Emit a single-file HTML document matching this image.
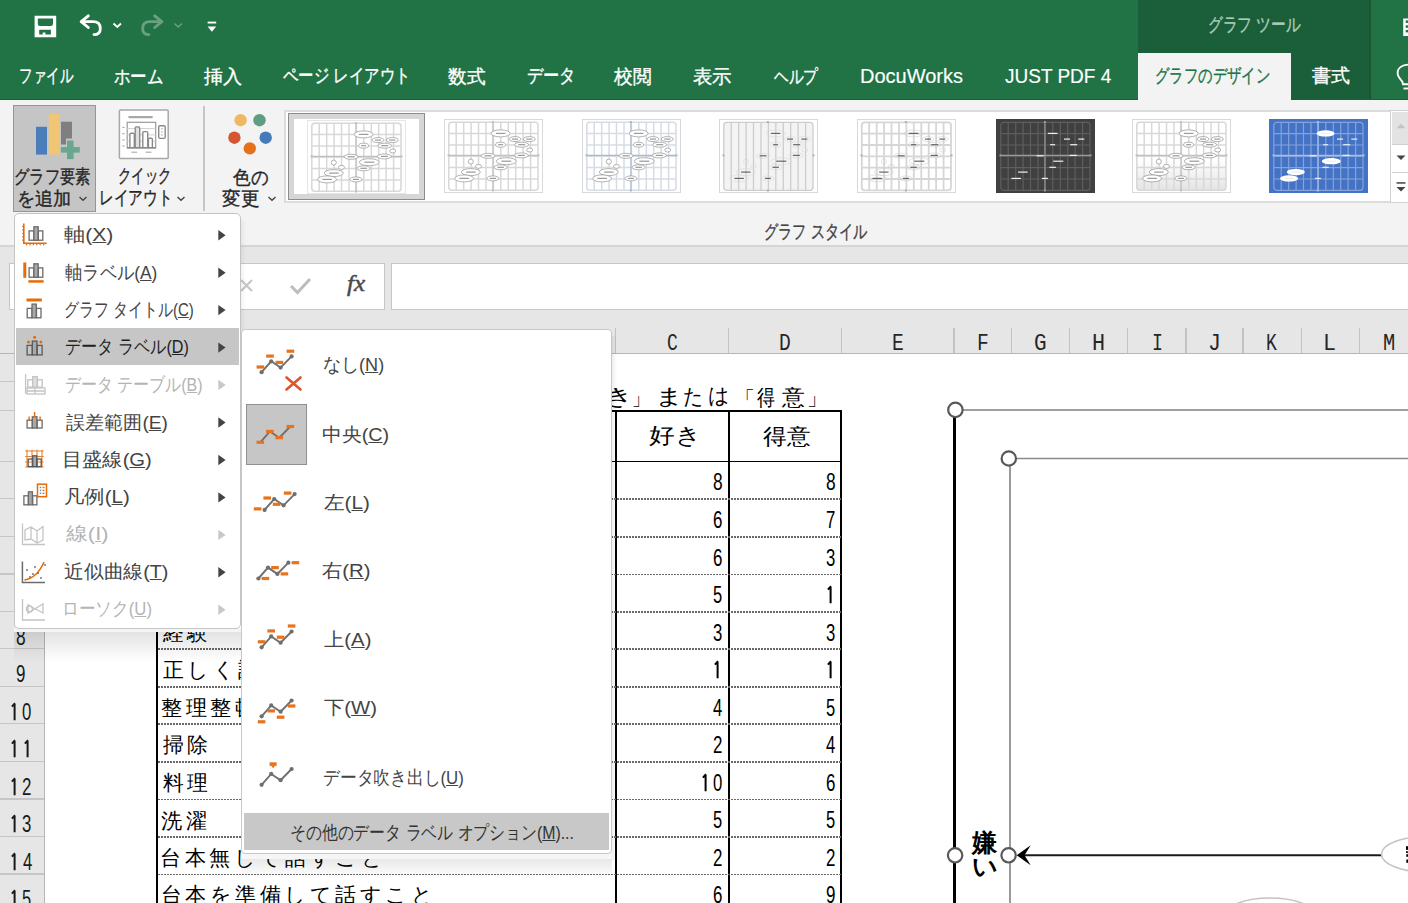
<!DOCTYPE html>
<html lang="ja"><head><meta charset="utf-8"><title>Excel</title>
<style>
html,body{margin:0;padding:0;width:1408px;height:903px;overflow:hidden;background:#fff;position:relative;font-family:'Liberation Sans',sans-serif}
body>div,body>svg{position:absolute}
.t{white-space:pre;transform-origin:0 0}
</style></head><body>
<div style="left:0px;top:0px;width:1408px;height:100px;background:#217346;"></div>
<div style="left:1137.5px;top:0px;width:233.0px;height:100px;background:#1b5e3a;"></div>
<div style="left:1137.5px;top:53px;width:153.0px;height:47px;background:#f3f3f3;"></div>
<div class="t" style="left:18.88px;top:57.10px;height:38px;line-height:38px;font-family:'Liberation Sans',sans-serif;font-size:19px;font-weight:400;color:#ffffff;transform:scaleX(0.7122);-webkit-text-stroke:0.35px currentColor">ファイル</div>
<div class="t" style="left:114.03px;top:57.60px;height:38px;line-height:38px;font-family:'Liberation Sans',sans-serif;font-size:19px;font-weight:400;color:#ffffff;transform:scaleX(0.8673);-webkit-text-stroke:0.35px currentColor">ホーム</div>
<div class="t" style="left:204.40px;top:57.75px;height:38px;line-height:38px;font-family:'Liberation Sans',sans-serif;font-size:19px;font-weight:400;color:#ffffff;transform:scaleX(1.0054);-webkit-text-stroke:0.35px currentColor">挿入</div>
<div class="t" style="left:283.40px;top:56.75px;height:38px;line-height:38px;font-family:'Liberation Sans',sans-serif;font-size:19px;font-weight:400;color:#ffffff;transform:scaleX(0.8092);-webkit-text-stroke:0.35px currentColor">ページ レイアウト</div>
<div class="t" style="left:448.30px;top:57.75px;height:38px;line-height:38px;font-family:'Liberation Sans',sans-serif;font-size:19px;font-weight:400;color:#ffffff;transform:scaleX(0.9816);-webkit-text-stroke:0.35px currentColor">数式</div>
<div class="t" style="left:526.55px;top:56.75px;height:38px;line-height:38px;font-family:'Liberation Sans',sans-serif;font-size:19px;font-weight:400;color:#ffffff;transform:scaleX(0.8547);-webkit-text-stroke:0.35px currentColor">データ</div>
<div class="t" style="left:613.90px;top:57.75px;height:38px;line-height:38px;font-family:'Liberation Sans',sans-serif;font-size:19px;font-weight:400;color:#ffffff;transform:scaleX(0.9838);-webkit-text-stroke:0.35px currentColor">校閲</div>
<div class="t" style="left:693.00px;top:57.75px;height:38px;line-height:38px;font-family:'Liberation Sans',sans-serif;font-size:19px;font-weight:400;color:#ffffff;transform:scaleX(1.0211);-webkit-text-stroke:0.35px currentColor">表示</div>
<div class="t" style="left:773.50px;top:58.25px;height:38px;line-height:38px;font-family:'Liberation Sans',sans-serif;font-size:19px;font-weight:400;color:#ffffff;transform:scaleX(0.7724);-webkit-text-stroke:0.35px currentColor">ヘルプ</div>
<div class="t" style="left:860.00px;top:56.30px;height:40px;line-height:40px;font-family:'Liberation Sans',sans-serif;font-size:20px;font-weight:400;color:#ffffff;transform:scaleX(1.0000);-webkit-text-stroke:0.15px currentColor">DocuWorks</div>
<div class="t" style="left:1004.60px;top:55.80px;height:40px;line-height:40px;font-family:'Liberation Sans',sans-serif;font-size:20px;font-weight:400;color:#ffffff;transform:scaleX(0.9500);-webkit-text-stroke:0.15px currentColor">JUST PDF 4</div>
<div class="t" style="left:1155.18px;top:56.85px;height:38px;line-height:38px;font-family:'Liberation Sans',sans-serif;font-size:19px;font-weight:400;color:#217346;transform:scaleX(0.7577);-webkit-text-stroke:0.35px currentColor">グラフのデザイン</div>
<div class="t" style="left:1312.30px;top:56.95px;height:38px;line-height:38px;font-family:'Liberation Sans',sans-serif;font-size:19px;font-weight:400;color:#ffffff;transform:scaleX(0.9974);-webkit-text-stroke:0.35px currentColor">書式</div>
<div class="t" style="left:1207.85px;top:6.10px;height:38px;line-height:38px;font-family:'Liberation Sans',sans-serif;font-size:19px;font-weight:400;color:#a9cdb8;transform:scaleX(0.7761);-webkit-text-stroke:0.35px currentColor">グラフ ツール</div>
<svg style="left:1400px;top:15px" width="8" height="25">
<rect x="3.2" y="3.5" width="4.8" height="17.5" fill="#fff"/>
<rect x="5.7" y="5.4" width="2.3" height="2.5" fill="#217346"/>
<rect x="5.7" y="10.3" width="2.3" height="2.5" fill="#217346"/>
<rect x="5.7" y="14.9" width="2.3" height="2.5" fill="#217346"/>
</svg>
<svg style="left:0;top:0" width="240" height="50">
<path fill="#fff" fill-rule="evenodd" d="M34.6 15.7 H56.2 V37.3 H34.6 Z M37.8 18.4 V23.8 Q37.8 26 40 26 H50.8 Q53 26 53 23.8 V18.4 Z M39.2 29.8 V34.6 H42.7 V32.6 H45.4 V34.6 H50.9 V29.8 Z"/>
<path d="M82 21.7 H93 Q100.3 21.7 100.3 28.4 Q100.3 34.6 94 34.6" fill="none" stroke="#fff" stroke-width="2.8" stroke-linecap="round"/>
<path d="M88.3 15.9 L81.2 21.7 L88.3 27.5" fill="none" stroke="#fff" stroke-width="2.9" stroke-linecap="round" stroke-linejoin="round"/>
<path d="M113.5 23.5 L117.3 27 L121 23.5" fill="none" stroke="#fff" stroke-width="1.9"/>
<g opacity="0.32">
<path d="M160.5 21.7 H150 Q142.7 21.7 142.7 28.4 Q142.7 34.6 149 34.6" fill="none" stroke="#fff" stroke-width="2.8" stroke-linecap="round"/>
<path d="M154.7 15.9 L161.8 21.7 L154.7 27.5" fill="none" stroke="#fff" stroke-width="2.9" stroke-linecap="round" stroke-linejoin="round"/>
<path d="M174.5 23.5 L178.2 27 L182 23.5" fill="none" stroke="#fff" stroke-width="1.6"/>
</g>
<rect x="207.6" y="21.6" width="8.6" height="1.9" fill="#fff"/>
<path d="M207.6 26.5 H216.2 L211.9 31.8 Z" fill="#fff"/>
</svg>
<svg style="left:1380px;top:55px" width="28" height="40">
<path d="M30 9.6 C22 9.6 17.6 13 17.6 18 C17.6 21.5 20 24 22.3 26.5 L23 29.2 H28" fill="none" stroke="#fff" stroke-width="1.9"/>
<path d="M23.5 33.5 H28" stroke="#fff" stroke-width="1.9"/>
</svg>
<div style="left:1368.5px;top:0px;width:2.0px;height:100px;background:#185634;"></div>
<div style="left:0px;top:100px;width:1408px;height:145px;background:#f3f3f3;"></div>
<div style="left:0px;top:99.2px;width:1137.5px;height:1.0px;background:#17613a;"></div>
<div style="left:1290.5px;top:99.2px;width:117.5px;height:1.0px;background:#17613a;"></div>
<div style="left:0px;top:245px;width:1408px;height:2px;background:#d5d5d5;"></div>
<div style="left:0px;top:247px;width:1408px;height:81px;background:#e6e6e6;"></div>
<div style="left:12.8px;top:104.5px;width:83.60000000000001px;height:107.1px;background:#c5c5c5;box-sizing:border-box;border:1.5px solid #959595"></div>
<svg style="left:0;top:100px" width="100" height="70">
<rect x="36" y="26.8" width="11" height="27.8" fill="#4a7ebb"/>
<rect x="48.8" y="14" width="10.9" height="40.6" fill="#f0c674"/>
<path d="M61 21.8 H72 V38.4 H66 V44.6 H61 Z" fill="#7f7f7f"/>
<rect x="60.9" y="47" width="18.9" height="5.6" fill="#68a890"/>
<rect x="67" y="40.5" width="6.6" height="18.6" fill="#68a890"/>
</svg>
<div class="t" style="left:13.78px;top:158.20px;height:38px;line-height:38px;font-family:'Liberation Sans',sans-serif;font-size:19px;font-weight:400;color:#262626;transform:scaleX(0.8086);-webkit-text-stroke:0.35px currentColor">グラフ要素</div>
<div class="t" style="left:16.59px;top:180.30px;height:38px;line-height:38px;font-family:'Liberation Sans',sans-serif;font-size:19px;font-weight:400;color:#262626;transform:scaleX(0.9528);-webkit-text-stroke:0.35px currentColor">を追加</div>
<div class="t" style="left:117.59px;top:157.20px;height:38px;line-height:38px;font-family:'Liberation Sans',sans-serif;font-size:19px;font-weight:400;color:#262626;transform:scaleX(0.7042);-webkit-text-stroke:0.35px currentColor">クイック</div>
<div class="t" style="left:98.68px;top:179.30px;height:38px;line-height:38px;font-family:'Liberation Sans',sans-serif;font-size:19px;font-weight:400;color:#262626;transform:scaleX(0.7727);-webkit-text-stroke:0.35px currentColor">レイアウト</div>
<div class="t" style="left:232.70px;top:158.70px;height:38px;line-height:38px;font-family:'Liberation Sans',sans-serif;font-size:19px;font-weight:400;color:#262626;transform:scaleX(0.9237);-webkit-text-stroke:0.35px currentColor">色の</div>
<div class="t" style="left:222.40px;top:180.30px;height:38px;line-height:38px;font-family:'Liberation Sans',sans-serif;font-size:19px;font-weight:400;color:#262626;transform:scaleX(0.9757);-webkit-text-stroke:0.35px currentColor">変更</div>
<svg style="left:0;top:190px" width="290" height="20">
<path d="M79.5 7 L83 10.3 L86.5 7" fill="none" stroke="#444" stroke-width="1.4"/>
<path d="M177.5 7 L181 10.3 L184.5 7" fill="none" stroke="#444" stroke-width="1.4"/>
<path d="M268.5 7 L272 10.3 L275.5 7" fill="none" stroke="#444" stroke-width="1.4"/>
</svg>
<svg style="left:112px;top:104px" width="64" height="60">
<rect x="7.4" y="6" width="48.8" height="48.5" rx="1" fill="#fff" stroke="#a8a8a8" stroke-width="1.5"/>
<rect x="16.3" y="12" width="24.6" height="2.3" rx="1" fill="#a8a8a8"/>
<rect x="15.2" y="18.3" width="28.5" height="25.4" fill="none" stroke="#9a9a9a" stroke-width="1.2"/>
<path d="M15.2 24.6 H43.7 M15.2 30.9 H43.7 M15.2 37.2 H43.7" stroke="#d0d0d0" stroke-width="1"/>
<g stroke="#8a8a8a" stroke-width="1.4" fill="#fff">
<path d="M17.9 43.5 V30.3 Q17.9 29.2 19 29.2 H21.2 Q22.3 29.2 22.3 30.3 V43.5"/>
<path d="M23.2 43.5 V24 Q23.2 22.9 24.3 22.9 H26.6 Q27.7 22.9 27.7 24 V43.5" fill="#e0e0e0"/>
<path d="M30.8 43.5 V28.7 Q30.8 27.6 31.9 27.6 H34.6 Q35.7 27.6 35.7 28.7 V43.5"/>
<path d="M36.4 43.5 V35.3 Q36.4 34.2 37.5 34.2 H39.3 Q40.4 34.2 40.4 35.3 V43.5"/>
</g>
<rect x="15" y="43" width="29" height="1.6" fill="#8a8a8a"/>
<g fill="#b0b0b0"><rect x="10.3" y="22.8" width="2.3" height="1.2"/><rect x="10.3" y="29.1" width="2.3" height="1.2"/><rect x="10.3" y="35.4" width="2.3" height="1.2"/><rect x="10.3" y="41.4" width="2.3" height="1.2"/>
<rect x="19.3" y="47.6" width="5.9" height="1.2"/><rect x="33.6" y="47.6" width="5.9" height="1.2"/></g>
<rect x="46.7" y="21.8" width="6.5" height="12.6" rx="1.3" fill="#fff" stroke="#8a8a8a" stroke-width="1.4"/>
<g fill="#b0b0b0"><rect x="49.2" y="24" width="1.4" height="1.3"/><rect x="49.2" y="27.3" width="1.4" height="1.3"/><rect x="49.2" y="30.3" width="1.4" height="1.3"/></g>
</svg>
<div style="left:203.3px;top:106px;width:1.5px;height:105px;background:#c6c6c6;"></div>
<svg style="left:225px;top:110px" width="50" height="50">
<circle cx="15.6" cy="10.2" r="6.2" fill="#efb864"/>
<circle cx="34.5" cy="10.2" r="6.2" fill="#5f9e84"/>
<circle cx="9.4" cy="27.7" r="6.2" fill="#d65532"/>
<circle cx="40.7" cy="27.7" r="6.2" fill="#447bb8"/>
<circle cx="24.8" cy="38.4" r="6.2" fill="#e6711d"/>
</svg>
<div style="left:284.2px;top:109.8px;width:1105.8px;height:93.00000000000001px;background:#ffffff;box-sizing:border-box;border-top:2px solid #dcdcdc;border-bottom:2px solid #dcdcdc;border-left:2px solid #dcdcdc"></div>
<div class="t" style="left:764.10px;top:212.80px;height:38px;line-height:38px;font-family:'Liberation Sans',sans-serif;font-size:19px;font-weight:400;color:#444;transform:scaleX(0.7478);-webkit-text-stroke:0.35px currentColor">グラフ スタイル</div>
<div style="left:287.7px;top:112.8px;width:136.90000000000003px;height:87.00000000000001px;background:#d6d6d6;box-sizing:border-box;border:1.8px solid #8c8c8c"></div>
<div style="left:293.6px;top:118.7px;width:125.39999999999998px;height:75.3px;background:#fff;"></div>
<svg style="left:306.5px;top:119.5px" width="99" height="74"><rect x="0.5" y="0.5" width="98" height="73" fill="#fff" stroke="#e6e6e6" stroke-width="1"/><g stroke="#d8d8d8" stroke-width="1.5" fill="none"><rect x="4.8" y="3.3" width="89.2" height="68" rx="3"/><path d="M12.2 3.3 V71.3"/><path d="M19.7 3.3 V71.3"/><path d="M27.1 3.3 V71.3"/><path d="M34.5 3.3 V71.3"/><path d="M42.0 3.3 V71.3"/><path d="M49.4 3.3 V71.3"/><path d="M56.8 3.3 V71.3"/><path d="M64.3 3.3 V71.3"/><path d="M71.7 3.3 V71.3"/><path d="M79.1 3.3 V71.3"/><path d="M86.6 3.3 V71.3"/><path d="M4.8 14.6 H94"/><path d="M4.8 26.0 H94"/><path d="M4.8 37.3 H94"/><path d="M4.8 48.6 H94"/><path d="M4.8 60.0 H94"/></g><path d="M48.9 3 V71.5 M4.5 36.4 H94.3" stroke="#c0c0c0" stroke-width="1.1"/><g fill="#c0c0c0"><rect x="47.9" y="2" width="2" height="2"/><rect x="47.9" y="70.5" width="2" height="2"/><rect x="3.5" y="35.4" width="2" height="2"/><rect x="93.5" y="35.4" width="2" height="2"/></g><ellipse cx="56.6" cy="14.4" rx="9.5" ry="3.5" fill="#fff" stroke="#a0a0a0" stroke-width="0.8"/><rect x="51.9" y="13.8" width="9.5" height="1.2" fill="#9a9a9a"/><ellipse cx="71" cy="20.1" rx="6" ry="2.5" fill="#fff" stroke="#a0a0a0" stroke-width="0.8"/><rect x="68.0" y="19.5" width="6.0" height="1.2" fill="#9a9a9a"/><ellipse cx="85.3" cy="20.1" rx="6" ry="2.5" fill="#fff" stroke="#a0a0a0" stroke-width="0.8"/><rect x="82.3" y="19.5" width="6.0" height="1.2" fill="#9a9a9a"/><ellipse cx="56.6" cy="25.7" rx="5" ry="2.5" fill="#fff" stroke="#a0a0a0" stroke-width="0.8"/><rect x="54.1" y="25.1" width="5.0" height="1.2" fill="#9a9a9a"/><ellipse cx="77.7" cy="25.7" rx="7" ry="2.5" fill="#fff" stroke="#a0a0a0" stroke-width="0.8"/><rect x="74.2" y="25.1" width="7.0" height="1.2" fill="#9a9a9a"/><ellipse cx="85.7" cy="31" rx="3" ry="2" fill="#fff" stroke="#a0a0a0" stroke-width="0.8"/><ellipse cx="44.1" cy="36.8" rx="7" ry="2.5" fill="#fff" stroke="#a0a0a0" stroke-width="0.8"/><rect x="40.6" y="36.2" width="7.0" height="1.2" fill="#9a9a9a"/><ellipse cx="77.3" cy="36.4" rx="7" ry="2.5" fill="#fff" stroke="#a0a0a0" stroke-width="0.8"/><rect x="73.8" y="35.8" width="7.0" height="1.2" fill="#9a9a9a"/><ellipse cx="62.3" cy="42.2" rx="10" ry="3.5" fill="#fff" stroke="#a0a0a0" stroke-width="0.8"/><rect x="57.3" y="41.6" width="10.0" height="1.2" fill="#9a9a9a"/><ellipse cx="26.8" cy="42.6" rx="2.5" ry="2.5" fill="#fff" stroke="#a0a0a0" stroke-width="0.8"/><ellipse cx="34.5" cy="47.4" rx="3" ry="2" fill="#fff" stroke="#a0a0a0" stroke-width="0.8"/><ellipse cx="56.6" cy="48.3" rx="6.5" ry="2.5" fill="#fff" stroke="#a0a0a0" stroke-width="0.8"/><rect x="53.4" y="47.7" width="6.5" height="1.2" fill="#9a9a9a"/><ellipse cx="26.8" cy="53.1" rx="9.5" ry="3.5" fill="#fff" stroke="#a0a0a0" stroke-width="0.8"/><rect x="22.1" y="52.5" width="9.5" height="1.2" fill="#9a9a9a"/><ellipse cx="20.1" cy="59.4" rx="9.5" ry="3.5" fill="#fff" stroke="#a0a0a0" stroke-width="0.8"/><rect x="15.4" y="58.8" width="9.5" height="1.2" fill="#9a9a9a"/><ellipse cx="48.9" cy="59.4" rx="6" ry="2.5" fill="#fff" stroke="#a0a0a0" stroke-width="0.8"/><rect x="45.9" y="58.8" width="6.0" height="1.2" fill="#9a9a9a"/></svg>
<svg style="left:444.4px;top:119.1px" width="99" height="74"><rect x="0.5" y="0.5" width="98" height="73" fill="#fff" stroke="#d9d9d9" stroke-width="1"/><g stroke="#d8d8d8" stroke-width="1.5" fill="none"><rect x="4.8" y="3.3" width="89.2" height="68" rx="3"/><path d="M12.2 3.3 V71.3"/><path d="M19.7 3.3 V71.3"/><path d="M27.1 3.3 V71.3"/><path d="M34.5 3.3 V71.3"/><path d="M42.0 3.3 V71.3"/><path d="M49.4 3.3 V71.3"/><path d="M56.8 3.3 V71.3"/><path d="M64.3 3.3 V71.3"/><path d="M71.7 3.3 V71.3"/><path d="M79.1 3.3 V71.3"/><path d="M86.6 3.3 V71.3"/><path d="M4.8 14.6 H94"/><path d="M4.8 26.0 H94"/><path d="M4.8 37.3 H94"/><path d="M4.8 48.6 H94"/><path d="M4.8 60.0 H94"/></g><path d="M48.9 3 V71.5 M4.5 36.4 H94.3" stroke="#c0c0c0" stroke-width="1.1"/><g fill="#c0c0c0"><rect x="47.9" y="2" width="2" height="2"/><rect x="47.9" y="70.5" width="2" height="2"/><rect x="3.5" y="35.4" width="2" height="2"/><rect x="93.5" y="35.4" width="2" height="2"/></g><ellipse cx="56.6" cy="14.4" rx="9.5" ry="3.5" fill="#fff" stroke="#a0a0a0" stroke-width="0.8"/><rect x="51.9" y="13.8" width="9.5" height="1.2" fill="#9a9a9a"/><ellipse cx="71" cy="20.1" rx="6" ry="2.5" fill="#fff" stroke="#a0a0a0" stroke-width="0.8"/><rect x="68.0" y="19.5" width="6.0" height="1.2" fill="#9a9a9a"/><ellipse cx="85.3" cy="20.1" rx="6" ry="2.5" fill="#fff" stroke="#a0a0a0" stroke-width="0.8"/><rect x="82.3" y="19.5" width="6.0" height="1.2" fill="#9a9a9a"/><ellipse cx="56.6" cy="25.7" rx="5" ry="2.5" fill="#fff" stroke="#a0a0a0" stroke-width="0.8"/><rect x="54.1" y="25.1" width="5.0" height="1.2" fill="#9a9a9a"/><ellipse cx="77.7" cy="25.7" rx="7" ry="2.5" fill="#fff" stroke="#a0a0a0" stroke-width="0.8"/><rect x="74.2" y="25.1" width="7.0" height="1.2" fill="#9a9a9a"/><ellipse cx="85.7" cy="31" rx="3" ry="2" fill="#fff" stroke="#a0a0a0" stroke-width="0.8"/><ellipse cx="44.1" cy="36.8" rx="7" ry="2.5" fill="#fff" stroke="#a0a0a0" stroke-width="0.8"/><rect x="40.6" y="36.2" width="7.0" height="1.2" fill="#9a9a9a"/><ellipse cx="77.3" cy="36.4" rx="7" ry="2.5" fill="#fff" stroke="#a0a0a0" stroke-width="0.8"/><rect x="73.8" y="35.8" width="7.0" height="1.2" fill="#9a9a9a"/><ellipse cx="62.3" cy="42.2" rx="10" ry="3.5" fill="#fff" stroke="#a0a0a0" stroke-width="0.8"/><rect x="57.3" y="41.6" width="10.0" height="1.2" fill="#9a9a9a"/><ellipse cx="26.8" cy="42.6" rx="2.5" ry="2.5" fill="#fff" stroke="#a0a0a0" stroke-width="0.8"/><ellipse cx="34.5" cy="47.4" rx="3" ry="2" fill="#fff" stroke="#a0a0a0" stroke-width="0.8"/><ellipse cx="56.6" cy="48.3" rx="6.5" ry="2.5" fill="#fff" stroke="#a0a0a0" stroke-width="0.8"/><rect x="53.4" y="47.7" width="6.5" height="1.2" fill="#9a9a9a"/><ellipse cx="26.8" cy="53.1" rx="9.5" ry="3.5" fill="#fff" stroke="#a0a0a0" stroke-width="0.8"/><rect x="22.1" y="52.5" width="9.5" height="1.2" fill="#9a9a9a"/><ellipse cx="20.1" cy="59.4" rx="9.5" ry="3.5" fill="#fff" stroke="#a0a0a0" stroke-width="0.8"/><rect x="15.4" y="58.8" width="9.5" height="1.2" fill="#9a9a9a"/><ellipse cx="48.9" cy="59.4" rx="6" ry="2.5" fill="#fff" stroke="#a0a0a0" stroke-width="0.8"/><rect x="45.9" y="58.8" width="6.0" height="1.2" fill="#9a9a9a"/></svg>
<svg style="left:581.9px;top:119.1px" width="99" height="74"><rect x="0.5" y="0.5" width="98" height="73" fill="#fff" stroke="#d9d9d9" stroke-width="1"/><g stroke="#d6dbe4" stroke-width="1.5" fill="none"><rect x="4.8" y="3.3" width="89.2" height="68" rx="3"/><path d="M12.2 3.3 V71.3"/><path d="M19.7 3.3 V71.3"/><path d="M27.1 3.3 V71.3"/><path d="M34.5 3.3 V71.3"/><path d="M42.0 3.3 V71.3"/><path d="M49.4 3.3 V71.3"/><path d="M56.8 3.3 V71.3"/><path d="M64.3 3.3 V71.3"/><path d="M71.7 3.3 V71.3"/><path d="M79.1 3.3 V71.3"/><path d="M86.6 3.3 V71.3"/><path d="M4.8 14.6 H94"/><path d="M4.8 26.0 H94"/><path d="M4.8 37.3 H94"/><path d="M4.8 48.6 H94"/><path d="M4.8 60.0 H94"/></g><path d="M48.9 3 V71.5 M4.5 36.4 H94.3" stroke="#a9b9d3" stroke-width="1.1"/><g fill="#a9b9d3"><rect x="47.9" y="2" width="2" height="2"/><rect x="47.9" y="70.5" width="2" height="2"/><rect x="3.5" y="35.4" width="2" height="2"/><rect x="93.5" y="35.4" width="2" height="2"/></g><ellipse cx="56.6" cy="14.4" rx="9.5" ry="3.5" fill="#fff" stroke="#a0a0a0" stroke-width="0.8"/><rect x="51.9" y="13.8" width="9.5" height="1.2" fill="#9a9a9a"/><ellipse cx="71" cy="20.1" rx="6" ry="2.5" fill="#fff" stroke="#a0a0a0" stroke-width="0.8"/><rect x="68.0" y="19.5" width="6.0" height="1.2" fill="#9a9a9a"/><ellipse cx="85.3" cy="20.1" rx="6" ry="2.5" fill="#fff" stroke="#a0a0a0" stroke-width="0.8"/><rect x="82.3" y="19.5" width="6.0" height="1.2" fill="#9a9a9a"/><ellipse cx="56.6" cy="25.7" rx="5" ry="2.5" fill="#fff" stroke="#a0a0a0" stroke-width="0.8"/><rect x="54.1" y="25.1" width="5.0" height="1.2" fill="#9a9a9a"/><ellipse cx="77.7" cy="25.7" rx="7" ry="2.5" fill="#fff" stroke="#a0a0a0" stroke-width="0.8"/><rect x="74.2" y="25.1" width="7.0" height="1.2" fill="#9a9a9a"/><ellipse cx="85.7" cy="31" rx="3" ry="2" fill="#fff" stroke="#a0a0a0" stroke-width="0.8"/><ellipse cx="44.1" cy="36.8" rx="7" ry="2.5" fill="#fff" stroke="#a0a0a0" stroke-width="0.8"/><rect x="40.6" y="36.2" width="7.0" height="1.2" fill="#9a9a9a"/><ellipse cx="77.3" cy="36.4" rx="7" ry="2.5" fill="#fff" stroke="#a0a0a0" stroke-width="0.8"/><rect x="73.8" y="35.8" width="7.0" height="1.2" fill="#9a9a9a"/><ellipse cx="62.3" cy="42.2" rx="10" ry="3.5" fill="#fff" stroke="#a0a0a0" stroke-width="0.8"/><rect x="57.3" y="41.6" width="10.0" height="1.2" fill="#9a9a9a"/><ellipse cx="26.8" cy="42.6" rx="2.5" ry="2.5" fill="#fff" stroke="#a0a0a0" stroke-width="0.8"/><ellipse cx="34.5" cy="47.4" rx="3" ry="2" fill="#fff" stroke="#a0a0a0" stroke-width="0.8"/><ellipse cx="56.6" cy="48.3" rx="6.5" ry="2.5" fill="#fff" stroke="#a0a0a0" stroke-width="0.8"/><rect x="53.4" y="47.7" width="6.5" height="1.2" fill="#9a9a9a"/><ellipse cx="26.8" cy="53.1" rx="9.5" ry="3.5" fill="#fff" stroke="#a0a0a0" stroke-width="0.8"/><rect x="22.1" y="52.5" width="9.5" height="1.2" fill="#9a9a9a"/><ellipse cx="20.1" cy="59.4" rx="9.5" ry="3.5" fill="#fff" stroke="#a0a0a0" stroke-width="0.8"/><rect x="15.4" y="58.8" width="9.5" height="1.2" fill="#9a9a9a"/><ellipse cx="48.9" cy="59.4" rx="6" ry="2.5" fill="#fff" stroke="#a0a0a0" stroke-width="0.8"/><rect x="45.9" y="58.8" width="6.0" height="1.2" fill="#9a9a9a"/></svg>
<svg style="left:719.2px;top:119.1px" width="99" height="74"><rect x="0.5" y="0.5" width="98" height="73" fill="#fff" stroke="#d9d9d9" stroke-width="1"/><rect x="4.8" y="3.3" width="89.2" height="68" rx="3" fill="#f3f3f3"/><g stroke="#cdcdcd" stroke-width="1.3" fill="none"><rect x="4.8" y="3.3" width="89.2" height="68" rx="3"/><path d="M12.2 3.3 V71.3"/><path d="M19.7 3.3 V71.3"/><path d="M27.1 3.3 V71.3"/><path d="M34.5 3.3 V71.3"/><path d="M42.0 3.3 V71.3"/><path d="M49.4 3.3 V71.3"/><path d="M56.8 3.3 V71.3"/><path d="M64.3 3.3 V71.3"/><path d="M71.7 3.3 V71.3"/><path d="M79.1 3.3 V71.3"/><path d="M86.6 3.3 V71.3"/></g><g fill="#b0b0b0"><rect x="47.9" y="2" width="2" height="2"/><rect x="47.9" y="70.5" width="2" height="2"/><rect x="3.5" y="35.4" width="2" height="2"/><rect x="93.5" y="35.4" width="2" height="2"/></g><ellipse cx="56.6" cy="14.4" rx="9.5" ry="3.5" fill="none" stroke="#d8d8d8" stroke-width="0.6"/><rect x="51.9" y="13.8" width="9.5" height="1.2" fill="#666"/><ellipse cx="71" cy="20.1" rx="6" ry="2.5" fill="none" stroke="#d8d8d8" stroke-width="0.6"/><rect x="68.0" y="19.5" width="6.0" height="1.2" fill="#666"/><ellipse cx="85.3" cy="20.1" rx="6" ry="2.5" fill="none" stroke="#d8d8d8" stroke-width="0.6"/><rect x="82.3" y="19.5" width="6.0" height="1.2" fill="#666"/><ellipse cx="56.6" cy="25.7" rx="5" ry="2.5" fill="none" stroke="#d8d8d8" stroke-width="0.6"/><rect x="54.1" y="25.1" width="5.0" height="1.2" fill="#666"/><ellipse cx="77.7" cy="25.7" rx="7" ry="2.5" fill="none" stroke="#d8d8d8" stroke-width="0.6"/><rect x="74.2" y="25.1" width="7.0" height="1.2" fill="#666"/><ellipse cx="85.7" cy="31" rx="3" ry="2" fill="none" stroke="#d8d8d8" stroke-width="0.6"/><ellipse cx="44.1" cy="36.8" rx="7" ry="2.5" fill="none" stroke="#d8d8d8" stroke-width="0.6"/><rect x="40.6" y="36.2" width="7.0" height="1.2" fill="#666"/><ellipse cx="77.3" cy="36.4" rx="7" ry="2.5" fill="none" stroke="#d8d8d8" stroke-width="0.6"/><rect x="73.8" y="35.8" width="7.0" height="1.2" fill="#666"/><ellipse cx="62.3" cy="42.2" rx="10" ry="3.5" fill="none" stroke="#d8d8d8" stroke-width="0.6"/><rect x="57.3" y="41.6" width="10.0" height="1.2" fill="#666"/><ellipse cx="26.8" cy="42.6" rx="2.5" ry="2.5" fill="none" stroke="#d8d8d8" stroke-width="0.6"/><ellipse cx="34.5" cy="47.4" rx="3" ry="2" fill="none" stroke="#d8d8d8" stroke-width="0.6"/><ellipse cx="56.6" cy="48.3" rx="6.5" ry="2.5" fill="none" stroke="#d8d8d8" stroke-width="0.6"/><rect x="53.4" y="47.7" width="6.5" height="1.2" fill="#666"/><ellipse cx="26.8" cy="53.1" rx="9.5" ry="3.5" fill="none" stroke="#d8d8d8" stroke-width="0.6"/><rect x="22.1" y="52.5" width="9.5" height="1.2" fill="#666"/><ellipse cx="20.1" cy="59.4" rx="9.5" ry="3.5" fill="none" stroke="#d8d8d8" stroke-width="0.6"/><rect x="15.4" y="58.8" width="9.5" height="1.2" fill="#666"/><ellipse cx="48.9" cy="59.4" rx="6" ry="2.5" fill="none" stroke="#d8d8d8" stroke-width="0.6"/><rect x="45.9" y="58.8" width="6.0" height="1.2" fill="#666"/></svg>
<svg style="left:856.9px;top:119.1px" width="99" height="74"><rect x="0.5" y="0.5" width="98" height="73" fill="#fff" stroke="#d9d9d9" stroke-width="1"/><g stroke="#d6d6d6" stroke-width="1.8" fill="none"><rect x="4.8" y="3.3" width="89.2" height="68" rx="3"/><path d="M12.2 3.3 V71.3"/><path d="M19.7 3.3 V71.3"/><path d="M27.1 3.3 V71.3"/><path d="M34.5 3.3 V71.3"/><path d="M42.0 3.3 V71.3"/><path d="M49.4 3.3 V71.3"/><path d="M56.8 3.3 V71.3"/><path d="M64.3 3.3 V71.3"/><path d="M71.7 3.3 V71.3"/><path d="M79.1 3.3 V71.3"/><path d="M86.6 3.3 V71.3"/><path d="M4.8 14.6 H94"/><path d="M4.8 26.0 H94"/><path d="M4.8 37.3 H94"/><path d="M4.8 48.6 H94"/><path d="M4.8 60.0 H94"/></g><g fill="#b0b0b0"><rect x="47.9" y="2" width="2" height="2"/><rect x="47.9" y="70.5" width="2" height="2"/><rect x="3.5" y="35.4" width="2" height="2"/><rect x="93.5" y="35.4" width="2" height="2"/></g><ellipse cx="56.6" cy="14.4" rx="9.5" ry="3.5" fill="none" stroke="#d0d0d0" stroke-width="0.6"/><rect x="51.9" y="13.8" width="9.5" height="1.2" fill="#666"/><ellipse cx="71" cy="20.1" rx="6" ry="2.5" fill="none" stroke="#d0d0d0" stroke-width="0.6"/><rect x="68.0" y="19.5" width="6.0" height="1.2" fill="#666"/><ellipse cx="85.3" cy="20.1" rx="6" ry="2.5" fill="none" stroke="#d0d0d0" stroke-width="0.6"/><rect x="82.3" y="19.5" width="6.0" height="1.2" fill="#666"/><ellipse cx="56.6" cy="25.7" rx="5" ry="2.5" fill="none" stroke="#d0d0d0" stroke-width="0.6"/><rect x="54.1" y="25.1" width="5.0" height="1.2" fill="#666"/><ellipse cx="77.7" cy="25.7" rx="7" ry="2.5" fill="none" stroke="#d0d0d0" stroke-width="0.6"/><rect x="74.2" y="25.1" width="7.0" height="1.2" fill="#666"/><ellipse cx="85.7" cy="31" rx="3" ry="2" fill="none" stroke="#d0d0d0" stroke-width="0.6"/><ellipse cx="44.1" cy="36.8" rx="7" ry="2.5" fill="none" stroke="#d0d0d0" stroke-width="0.6"/><rect x="40.6" y="36.2" width="7.0" height="1.2" fill="#666"/><ellipse cx="77.3" cy="36.4" rx="7" ry="2.5" fill="none" stroke="#d0d0d0" stroke-width="0.6"/><rect x="73.8" y="35.8" width="7.0" height="1.2" fill="#666"/><ellipse cx="62.3" cy="42.2" rx="10" ry="3.5" fill="none" stroke="#d0d0d0" stroke-width="0.6"/><rect x="57.3" y="41.6" width="10.0" height="1.2" fill="#666"/><ellipse cx="26.8" cy="42.6" rx="2.5" ry="2.5" fill="none" stroke="#d0d0d0" stroke-width="0.6"/><ellipse cx="34.5" cy="47.4" rx="3" ry="2" fill="none" stroke="#d0d0d0" stroke-width="0.6"/><ellipse cx="56.6" cy="48.3" rx="6.5" ry="2.5" fill="none" stroke="#d0d0d0" stroke-width="0.6"/><rect x="53.4" y="47.7" width="6.5" height="1.2" fill="#666"/><ellipse cx="26.8" cy="53.1" rx="9.5" ry="3.5" fill="none" stroke="#d0d0d0" stroke-width="0.6"/><rect x="22.1" y="52.5" width="9.5" height="1.2" fill="#666"/><ellipse cx="20.1" cy="59.4" rx="9.5" ry="3.5" fill="none" stroke="#d0d0d0" stroke-width="0.6"/><rect x="15.4" y="58.8" width="9.5" height="1.2" fill="#666"/><ellipse cx="48.9" cy="59.4" rx="6" ry="2.5" fill="none" stroke="#d0d0d0" stroke-width="0.6"/><rect x="45.9" y="58.8" width="6.0" height="1.2" fill="#666"/></svg>
<svg style="left:995.9px;top:119.1px" width="99" height="74"><rect x="0.5" y="0.5" width="98" height="73" fill="#404040" stroke="#404040" stroke-width="1"/><g stroke="#5e5e5e" stroke-width="1.2" fill="none"><rect x="4.8" y="3.3" width="89.2" height="68" rx="3"/><path d="M12.2 3.3 V71.3"/><path d="M19.7 3.3 V71.3"/><path d="M27.1 3.3 V71.3"/><path d="M34.5 3.3 V71.3"/><path d="M42.0 3.3 V71.3"/><path d="M49.4 3.3 V71.3"/><path d="M56.8 3.3 V71.3"/><path d="M64.3 3.3 V71.3"/><path d="M71.7 3.3 V71.3"/><path d="M79.1 3.3 V71.3"/><path d="M86.6 3.3 V71.3"/><path d="M4.8 14.6 H94"/><path d="M4.8 26.0 H94"/><path d="M4.8 37.3 H94"/><path d="M4.8 48.6 H94"/><path d="M4.8 60.0 H94"/></g><path d="M48.9 3 V71.5 M4.5 36.4 H94.3" stroke="#9a9a9a" stroke-width="1.1"/><g fill="#9a9a9a"><rect x="47.9" y="2" width="2" height="2"/><rect x="47.9" y="70.5" width="2" height="2"/><rect x="3.5" y="35.4" width="2" height="2"/><rect x="93.5" y="35.4" width="2" height="2"/></g><rect x="51.9" y="13.8" width="9.5" height="1.2" fill="#f0f0f0"/><rect x="68.0" y="19.5" width="6.0" height="1.2" fill="#f0f0f0"/><rect x="82.3" y="19.5" width="6.0" height="1.2" fill="#f0f0f0"/><rect x="54.1" y="25.1" width="5.0" height="1.2" fill="#f0f0f0"/><rect x="74.2" y="25.1" width="7.0" height="1.2" fill="#f0f0f0"/><rect x="40.6" y="36.2" width="7.0" height="1.2" fill="#f0f0f0"/><rect x="73.8" y="35.8" width="7.0" height="1.2" fill="#f0f0f0"/><rect x="57.3" y="41.6" width="10.0" height="1.2" fill="#f0f0f0"/><rect x="53.4" y="47.7" width="6.5" height="1.2" fill="#f0f0f0"/><rect x="22.1" y="52.5" width="9.5" height="1.2" fill="#f0f0f0"/><rect x="15.4" y="58.8" width="9.5" height="1.2" fill="#f0f0f0"/><rect x="45.9" y="58.8" width="6.0" height="1.2" fill="#f0f0f0"/></svg>
<svg style="left:1132px;top:119.1px" width="99" height="74"><rect x="0.5" y="0.5" width="98" height="73" fill="#fff" stroke="#d9d9d9" stroke-width="1"/><defs><linearGradient id="gg" x1="0" y1="0" x2="0" y2="1"><stop offset="0.55" stop-color="#fff"/><stop offset="1" stop-color="#e4e4e4"/></linearGradient></defs><rect x="4.8" y="3.3" width="89.2" height="68" fill="url(#gg)"/><g stroke="#d8d8d8" stroke-width="1.5" fill="none"><rect x="4.8" y="3.3" width="89.2" height="68" rx="3"/><path d="M12.2 3.3 V71.3"/><path d="M19.7 3.3 V71.3"/><path d="M27.1 3.3 V71.3"/><path d="M34.5 3.3 V71.3"/><path d="M42.0 3.3 V71.3"/><path d="M49.4 3.3 V71.3"/><path d="M56.8 3.3 V71.3"/><path d="M64.3 3.3 V71.3"/><path d="M71.7 3.3 V71.3"/><path d="M79.1 3.3 V71.3"/><path d="M86.6 3.3 V71.3"/><path d="M4.8 14.6 H94"/><path d="M4.8 26.0 H94"/><path d="M4.8 37.3 H94"/><path d="M4.8 48.6 H94"/><path d="M4.8 60.0 H94"/></g><path d="M48.9 3 V71.5 M4.5 36.4 H94.3" stroke="#c0c0c0" stroke-width="1.1"/><g fill="#c0c0c0"><rect x="47.9" y="2" width="2" height="2"/><rect x="47.9" y="70.5" width="2" height="2"/><rect x="3.5" y="35.4" width="2" height="2"/><rect x="93.5" y="35.4" width="2" height="2"/></g><ellipse cx="56.6" cy="14.4" rx="9.5" ry="3.5" fill="#fff" stroke="#9a9a9a" stroke-width="0.8"/><rect x="51.9" y="13.8" width="9.5" height="1.2" fill="#9a9a9a"/><ellipse cx="71" cy="20.1" rx="6" ry="2.5" fill="#fff" stroke="#9a9a9a" stroke-width="0.8"/><rect x="68.0" y="19.5" width="6.0" height="1.2" fill="#9a9a9a"/><ellipse cx="85.3" cy="20.1" rx="6" ry="2.5" fill="#fff" stroke="#9a9a9a" stroke-width="0.8"/><rect x="82.3" y="19.5" width="6.0" height="1.2" fill="#9a9a9a"/><ellipse cx="56.6" cy="25.7" rx="5" ry="2.5" fill="#fff" stroke="#9a9a9a" stroke-width="0.8"/><rect x="54.1" y="25.1" width="5.0" height="1.2" fill="#9a9a9a"/><ellipse cx="77.7" cy="25.7" rx="7" ry="2.5" fill="#fff" stroke="#9a9a9a" stroke-width="0.8"/><rect x="74.2" y="25.1" width="7.0" height="1.2" fill="#9a9a9a"/><ellipse cx="85.7" cy="31" rx="3" ry="2" fill="#fff" stroke="#9a9a9a" stroke-width="0.8"/><ellipse cx="44.1" cy="36.8" rx="7" ry="2.5" fill="#fff" stroke="#9a9a9a" stroke-width="0.8"/><rect x="40.6" y="36.2" width="7.0" height="1.2" fill="#9a9a9a"/><ellipse cx="77.3" cy="36.4" rx="7" ry="2.5" fill="#fff" stroke="#9a9a9a" stroke-width="0.8"/><rect x="73.8" y="35.8" width="7.0" height="1.2" fill="#9a9a9a"/><ellipse cx="62.3" cy="42.2" rx="10" ry="3.5" fill="#fff" stroke="#9a9a9a" stroke-width="0.8"/><rect x="57.3" y="41.6" width="10.0" height="1.2" fill="#9a9a9a"/><ellipse cx="26.8" cy="42.6" rx="2.5" ry="2.5" fill="#fff" stroke="#9a9a9a" stroke-width="0.8"/><ellipse cx="34.5" cy="47.4" rx="3" ry="2" fill="#fff" stroke="#9a9a9a" stroke-width="0.8"/><ellipse cx="56.6" cy="48.3" rx="6.5" ry="2.5" fill="#fff" stroke="#9a9a9a" stroke-width="0.8"/><rect x="53.4" y="47.7" width="6.5" height="1.2" fill="#9a9a9a"/><ellipse cx="26.8" cy="53.1" rx="9.5" ry="3.5" fill="#fff" stroke="#9a9a9a" stroke-width="0.8"/><rect x="22.1" y="52.5" width="9.5" height="1.2" fill="#9a9a9a"/><ellipse cx="20.1" cy="59.4" rx="9.5" ry="3.5" fill="#fff" stroke="#9a9a9a" stroke-width="0.8"/><rect x="15.4" y="58.8" width="9.5" height="1.2" fill="#9a9a9a"/><ellipse cx="48.9" cy="59.4" rx="6" ry="2.5" fill="#fff" stroke="#9a9a9a" stroke-width="0.8"/><rect x="45.9" y="58.8" width="6.0" height="1.2" fill="#9a9a9a"/></svg>
<svg style="left:1269.4px;top:118.8px" width="99" height="74"><rect x="0.5" y="0.5" width="98" height="73" fill="#4472c4" stroke="#4472c4" stroke-width="1"/><g stroke="#84a3da" stroke-width="1.2" fill="none"><rect x="4.8" y="3.3" width="89.2" height="68" rx="3"/><path d="M12.2 3.3 V71.3"/><path d="M19.7 3.3 V71.3"/><path d="M27.1 3.3 V71.3"/><path d="M34.5 3.3 V71.3"/><path d="M42.0 3.3 V71.3"/><path d="M49.4 3.3 V71.3"/><path d="M56.8 3.3 V71.3"/><path d="M64.3 3.3 V71.3"/><path d="M71.7 3.3 V71.3"/><path d="M79.1 3.3 V71.3"/><path d="M86.6 3.3 V71.3"/><path d="M4.8 14.6 H94"/><path d="M4.8 26.0 H94"/><path d="M4.8 37.3 H94"/><path d="M4.8 48.6 H94"/><path d="M4.8 60.0 H94"/></g><path d="M48.9 3 V71.5 M4.5 36.4 H94.3" stroke="#a8bde6" stroke-width="1.1"/><g fill="#a8bde6"><rect x="47.9" y="2" width="2" height="2"/><rect x="47.9" y="70.5" width="2" height="2"/><rect x="3.5" y="35.4" width="2" height="2"/><rect x="93.5" y="35.4" width="2" height="2"/></g><ellipse cx="56.6" cy="14.4" rx="9.025" ry="3.15" fill="#fff"/><rect x="51.9" y="13.8" width="9.5" height="1.2" fill="#e8eef8"/><rect x="68.0" y="19.5" width="6.0" height="1.2" fill="#e8eef8"/><rect x="82.3" y="19.5" width="6.0" height="1.2" fill="#e8eef8"/><rect x="54.1" y="25.1" width="5.0" height="1.2" fill="#e8eef8"/><rect x="74.2" y="25.1" width="7.0" height="1.2" fill="#e8eef8"/><rect x="40.6" y="36.2" width="7.0" height="1.2" fill="#e8eef8"/><rect x="73.8" y="35.8" width="7.0" height="1.2" fill="#e8eef8"/><ellipse cx="62.3" cy="42.2" rx="9.5" ry="3.15" fill="#fff"/><rect x="57.3" y="41.6" width="10.0" height="1.2" fill="#e8eef8"/><rect x="53.4" y="47.7" width="6.5" height="1.2" fill="#e8eef8"/><ellipse cx="26.8" cy="53.1" rx="9.025" ry="3.15" fill="#fff"/><rect x="22.1" y="52.5" width="9.5" height="1.2" fill="#e8eef8"/><ellipse cx="20.1" cy="59.4" rx="9.025" ry="3.15" fill="#fff"/><rect x="15.4" y="58.8" width="9.5" height="1.2" fill="#e8eef8"/><rect x="45.9" y="58.8" width="6.0" height="1.2" fill="#e8eef8"/></svg>
<div style="left:1390px;top:110px;width:18px;height:92.5px;background:#ffffff;box-sizing:border-box;border-left:1.5px solid #d0d0d0;border-top:1.5px solid #d0d0d0;border-bottom:1.5px solid #d0d0d0"></div>
<div style="left:1391.5px;top:111.5px;width:16.5px;height:32.0px;background:#e3e3e3;"></div>
<div style="left:1391.5px;top:143.5px;width:16.5px;height:1.3000000000000114px;background:#d0d0d0;"></div>
<div style="left:1391.5px;top:172px;width:16.5px;height:1.3000000000000114px;background:#d0d0d0;"></div>
<svg style="left:1390px;top:110px" width="18" height="92">
<path d="M6.5 18.3 L11 13.8 L15.5 18.3 Z" fill="#c4c4c4"/>
<path d="M6.5 45.5 L11 50 L15.5 45.5 Z" fill="#444"/>
<rect x="6.5" y="72.2" width="9" height="1.5" fill="#444"/>
<path d="M6.5 77 L11 81.5 L15.5 77 Z" fill="#444"/>
</svg>
<div style="left:9px;top:263px;width:376.3px;height:47px;background:#ffffff;box-sizing:border-box;border:1.5px solid #c6c6c6"></div>
<div style="left:391.2px;top:263px;width:1028.8px;height:47px;background:#ffffff;box-sizing:border-box;border:1.5px solid #c6c6c6"></div>
<svg style="left:230px;top:260px" width="160" height="50">
<path d="M11 20 L22 31 M22 20 L11 31" stroke="#c4c4c4" stroke-width="2"/>
<path d="M61 26 L67.5 32.5 L80 19" fill="none" stroke="#bdbdbd" stroke-width="3"/>
</svg>
<div class="t" style="left:347.00px;top:261.00px;height:46px;line-height:46px;font-family:'Liberation Serif',serif;font-size:23px;font-weight:400;color:#4a4a4a;transform:scaleX(1.0882);font-style:italic;-webkit-text-stroke:0.5px currentColor">fx</div>
<div style="left:0px;top:328px;width:1408px;height:25px;background:#e6e6e6;"></div>
<div style="left:0px;top:352.5px;width:1408px;height:1.5px;background:#b5b5b5;"></div>
<div style="left:156.9px;top:328px;width:1.1999999999999886px;height:25px;background:#c2c2c2;"></div>
<div style="left:615.1999999999999px;top:328px;width:1.2000000000000455px;height:25px;background:#c2c2c2;"></div>
<div style="left:728.0px;top:328px;width:1.2000000000000455px;height:25px;background:#c2c2c2;"></div>
<div style="left:840.6999999999999px;top:328px;width:1.2000000000000455px;height:25px;background:#c2c2c2;"></div>
<div style="left:953.4px;top:328px;width:1.2000000000000455px;height:25px;background:#c2c2c2;"></div>
<div style="left:1010.9px;top:328px;width:1.2000000000000455px;height:25px;background:#c2c2c2;"></div>
<div style="left:1069.0px;top:328px;width:1.199999999999818px;height:25px;background:#c2c2c2;"></div>
<div style="left:1127.2px;top:328px;width:1.199999999999818px;height:25px;background:#c2c2c2;"></div>
<div style="left:1185.4px;top:328px;width:1.199999999999818px;height:25px;background:#c2c2c2;"></div>
<div style="left:1242.4px;top:328px;width:1.199999999999818px;height:25px;background:#c2c2c2;"></div>
<div style="left:1300.7px;top:328px;width:1.199999999999818px;height:25px;background:#c2c2c2;"></div>
<div style="left:1358.8000000000002px;top:328px;width:1.199999999999818px;height:25px;background:#c2c2c2;"></div>
<div class="t" style="left:666.95px;top:319.65px;height:48px;line-height:48px;font-family:'Liberation Mono',monospace;font-size:24px;font-weight:400;color:#262626;transform:scaleX(0.7500);">C</div>
<div class="t" style="left:778.81px;top:319.65px;height:48px;line-height:48px;font-family:'Liberation Mono',monospace;font-size:24px;font-weight:400;color:#262626;transform:scaleX(0.8182);">D</div>
<div class="t" style="left:891.51px;top:319.65px;height:48px;line-height:48px;font-family:'Liberation Mono',monospace;font-size:24px;font-weight:400;color:#262626;transform:scaleX(0.8182);">E</div>
<div class="t" style="left:976.61px;top:319.65px;height:48px;line-height:48px;font-family:'Liberation Mono',monospace;font-size:24px;font-weight:400;color:#262626;transform:scaleX(0.8182);">F</div>
<div class="t" style="left:1034.42px;top:319.65px;height:48px;line-height:48px;font-family:'Liberation Mono',monospace;font-size:24px;font-weight:400;color:#262626;transform:scaleX(0.8750);">G</div>
<div class="t" style="left:1091.88px;top:319.65px;height:48px;line-height:48px;font-family:'Liberation Mono',monospace;font-size:24px;font-weight:400;color:#262626;transform:scaleX(0.9091);">H</div>
<div class="t" style="left:1151.58px;top:319.65px;height:48px;line-height:48px;font-family:'Liberation Mono',monospace;font-size:24px;font-weight:400;color:#262626;transform:scaleX(0.7600);">I</div>
<div class="t" style="left:1208.20px;top:319.65px;height:48px;line-height:48px;font-family:'Liberation Mono',monospace;font-size:24px;font-weight:400;color:#262626;transform:scaleX(0.9000);">J</div>
<div class="t" style="left:1266.15px;top:319.65px;height:48px;line-height:48px;font-family:'Liberation Mono',monospace;font-size:24px;font-weight:400;color:#262626;transform:scaleX(0.7500);">K</div>
<div class="t" style="left:1323.15px;top:319.65px;height:48px;line-height:48px;font-family:'Liberation Mono',monospace;font-size:24px;font-weight:400;color:#262626;transform:scaleX(0.9000);">L</div>
<div class="t" style="left:1382.50px;top:319.65px;height:48px;line-height:48px;font-family:'Liberation Mono',monospace;font-size:24px;font-weight:400;color:#262626;transform:scaleX(0.8500);">M</div>
<div style="left:0px;top:354px;width:44.5px;height:549px;background:#e6e6e6;"></div>
<div style="left:44px;top:354px;width:1.2999999999999972px;height:549px;background:#b5b5b5;"></div>
<div style="left:0px;top:380.9px;width:44px;height:1.2000000000000455px;background:#c6c6c6;"></div>
<div style="left:0px;top:409.9px;width:44px;height:1.2000000000000455px;background:#c6c6c6;"></div>
<div style="left:0px;top:460.7px;width:44px;height:1.2000000000000455px;background:#c6c6c6;"></div>
<div style="left:0px;top:498.2px;width:44px;height:1.2000000000000455px;background:#c6c6c6;"></div>
<div style="left:0px;top:535.8px;width:44px;height:1.2000000000000455px;background:#c6c6c6;"></div>
<div style="left:0px;top:573.4px;width:44px;height:1.2000000000000455px;background:#c6c6c6;"></div>
<div style="left:0px;top:610.9px;width:44px;height:1.2000000000000455px;background:#c6c6c6;"></div>
<div style="left:0px;top:648.1999999999999px;width:44px;height:1.2000000000000455px;background:#c6c6c6;"></div>
<div style="left:0px;top:685.6999999999999px;width:44px;height:1.2000000000000455px;background:#c6c6c6;"></div>
<div style="left:0px;top:723.3px;width:44px;height:1.2000000000000455px;background:#c6c6c6;"></div>
<div style="left:0px;top:760.8px;width:44px;height:1.2000000000000455px;background:#c6c6c6;"></div>
<div style="left:0px;top:798.4px;width:44px;height:1.2000000000000455px;background:#c6c6c6;"></div>
<div style="left:0px;top:835.9px;width:44px;height:1.2000000000000455px;background:#c6c6c6;"></div>
<div style="left:0px;top:873.4px;width:44px;height:1.2000000000000455px;background:#c6c6c6;"></div>
<div style="left:0px;top:910.9px;width:44px;height:1.2000000000000455px;background:#c6c6c6;"></div>
<svg style="left:15.50px;top:359.20px" width="12" height="19.3"><path d="M5.60 18.30 V1.6 M6.00 1.3 L2.90 4.6" stroke="#1a1a1a" stroke-width="2" fill="none"/></svg>
<div class="t" style="left:16.06px;top:375.35px;height:46px;line-height:46px;font-family:'Liberation Sans',sans-serif;font-size:23px;font-weight:400;color:#1a1a1a;transform:scaleX(0.7364);">2</div>
<div class="t" style="left:16.07px;top:426.15px;height:46px;line-height:46px;font-family:'Liberation Sans',sans-serif;font-size:23px;font-weight:400;color:#1a1a1a;transform:scaleX(0.7273);">3</div>
<div class="t" style="left:16.40px;top:463.65px;height:46px;line-height:46px;font-family:'Liberation Sans',sans-serif;font-size:23px;font-weight:400;color:#1a1a1a;transform:scaleX(0.7250);">4</div>
<div class="t" style="left:16.18px;top:501.25px;height:46px;line-height:46px;font-family:'Liberation Sans',sans-serif;font-size:23px;font-weight:400;color:#1a1a1a;transform:scaleX(0.7182);">5</div>
<div class="t" style="left:16.06px;top:538.85px;height:46px;line-height:46px;font-family:'Liberation Sans',sans-serif;font-size:23px;font-weight:400;color:#1a1a1a;transform:scaleX(0.7364);">6</div>
<div class="t" style="left:16.17px;top:576.35px;height:46px;line-height:46px;font-family:'Liberation Sans',sans-serif;font-size:23px;font-weight:400;color:#1a1a1a;transform:scaleX(0.7273);">7</div>
<div class="t" style="left:15.85px;top:613.65px;height:46px;line-height:46px;font-family:'Liberation Sans',sans-serif;font-size:23px;font-weight:400;color:#1a1a1a;transform:scaleX(0.7545);">8</div>
<div class="t" style="left:15.96px;top:651.15px;height:46px;line-height:46px;font-family:'Liberation Sans',sans-serif;font-size:23px;font-weight:400;color:#1a1a1a;transform:scaleX(0.7364);">9</div>
<div class="t" style="left:22.47px;top:688.75px;height:46px;line-height:46px;font-family:'Liberation Sans',sans-serif;font-size:23px;font-weight:400;color:#1a1a1a;transform:scaleX(0.7273);">0</div>
<svg style="left:9.20px;top:701.60px" width="12" height="19.3"><path d="M5.60 18.30 V1.6 M6.00 1.3 L2.90 4.6" stroke="#1a1a1a" stroke-width="2" fill="none"/></svg>
<svg style="left:21.70px;top:739.10px" width="12" height="19.3"><path d="M5.60 18.30 V1.6 M6.00 1.3 L2.90 4.6" stroke="#1a1a1a" stroke-width="2" fill="none"/></svg>
<svg style="left:9.20px;top:739.10px" width="12" height="19.3"><path d="M5.60 18.30 V1.6 M6.00 1.3 L2.90 4.6" stroke="#1a1a1a" stroke-width="2" fill="none"/></svg>
<div class="t" style="left:22.26px;top:763.85px;height:46px;line-height:46px;font-family:'Liberation Sans',sans-serif;font-size:23px;font-weight:400;color:#1a1a1a;transform:scaleX(0.7364);">2</div>
<svg style="left:9.20px;top:776.70px" width="12" height="19.3"><path d="M5.60 18.30 V1.6 M6.00 1.3 L2.90 4.6" stroke="#1a1a1a" stroke-width="2" fill="none"/></svg>
<div class="t" style="left:22.27px;top:801.35px;height:46px;line-height:46px;font-family:'Liberation Sans',sans-serif;font-size:23px;font-weight:400;color:#1a1a1a;transform:scaleX(0.7273);">3</div>
<svg style="left:9.20px;top:814.20px" width="12" height="19.3"><path d="M5.60 18.30 V1.6 M6.00 1.3 L2.90 4.6" stroke="#1a1a1a" stroke-width="2" fill="none"/></svg>
<div class="t" style="left:22.60px;top:838.85px;height:46px;line-height:46px;font-family:'Liberation Sans',sans-serif;font-size:23px;font-weight:400;color:#1a1a1a;transform:scaleX(0.7250);">4</div>
<svg style="left:9.20px;top:851.70px" width="12" height="19.3"><path d="M5.60 18.30 V1.6 M6.00 1.3 L2.90 4.6" stroke="#1a1a1a" stroke-width="2" fill="none"/></svg>
<div class="t" style="left:22.38px;top:876.35px;height:46px;line-height:46px;font-family:'Liberation Sans',sans-serif;font-size:23px;font-weight:400;color:#1a1a1a;transform:scaleX(0.7182);">5</div>
<svg style="left:9.20px;top:889.20px" width="12" height="19.3"><path d="M5.60 18.30 V1.6 M6.00 1.3 L2.90 4.6" stroke="#1a1a1a" stroke-width="2" fill="none"/></svg>
<div style="left:156.5px;top:409.8px;width:685.5px;height:1.8000000000000114px;background:#000;"></div>
<div style="left:156.5px;top:460.5px;width:685.5px;height:1.8000000000000114px;background:#000;"></div>
<div style="left:156.29999999999998px;top:409.8px;width:1.8000000000000114px;height:493.2px;background:#000;"></div>
<div style="left:615.1px;top:409.8px;width:1.7999999999999545px;height:493.2px;background:#000;"></div>
<div style="left:727.8000000000001px;top:409.8px;width:1.7999999999999545px;height:493.2px;background:#000;"></div>
<div style="left:840.2px;top:409.8px;width:1.7999999999999545px;height:493.2px;background:#000;"></div>
<div style="left:158px;top:498.3px;width:683px;height:1.8000000000000114px;background:linear-gradient(90deg,#686868 0 1.8px,transparent 1.8px 3px) 0 0/3px 100%;"></div>
<div style="left:158px;top:535.9px;width:683px;height:1.7999999999999545px;background:linear-gradient(90deg,#686868 0 1.8px,transparent 1.8px 3px) 0 0/3px 100%;"></div>
<div style="left:158px;top:573.5px;width:683px;height:1.7999999999999545px;background:linear-gradient(90deg,#686868 0 1.8px,transparent 1.8px 3px) 0 0/3px 100%;"></div>
<div style="left:158px;top:611.0px;width:683px;height:1.7999999999999545px;background:linear-gradient(90deg,#686868 0 1.8px,transparent 1.8px 3px) 0 0/3px 100%;"></div>
<div style="left:158px;top:648.3px;width:683px;height:1.7999999999999545px;background:linear-gradient(90deg,#686868 0 1.8px,transparent 1.8px 3px) 0 0/3px 100%;"></div>
<div style="left:158px;top:685.8px;width:683px;height:1.7999999999999545px;background:linear-gradient(90deg,#686868 0 1.8px,transparent 1.8px 3px) 0 0/3px 100%;"></div>
<div style="left:158px;top:723.4px;width:683px;height:1.7999999999999545px;background:linear-gradient(90deg,#686868 0 1.8px,transparent 1.8px 3px) 0 0/3px 100%;"></div>
<div style="left:158px;top:760.9px;width:683px;height:1.7999999999999545px;background:linear-gradient(90deg,#686868 0 1.8px,transparent 1.8px 3px) 0 0/3px 100%;"></div>
<div style="left:158px;top:798.5px;width:683px;height:1.7999999999999545px;background:linear-gradient(90deg,#686868 0 1.8px,transparent 1.8px 3px) 0 0/3px 100%;"></div>
<div style="left:158px;top:836.0px;width:683px;height:1.7999999999999545px;background:linear-gradient(90deg,#686868 0 1.8px,transparent 1.8px 3px) 0 0/3px 100%;"></div>
<div style="left:158px;top:873.5px;width:683px;height:1.7999999999999545px;background:linear-gradient(90deg,#686868 0 1.8px,transparent 1.8px 3px) 0 0/3px 100%;"></div>
<div class="t" style="left:602.93px;top:374.55px;height:44px;line-height:44px;font-family:'Liberation Sans',sans-serif;font-size:22px;font-weight:400;color:#000;transform:scaleX(1.3571);">き</div>
<div class="t" style="left:631.53px;top:375.95px;height:44px;line-height:44px;font-family:'Liberation Sans',sans-serif;font-size:22px;font-weight:400;color:#000;transform:scaleX(0.7857);">」</div>
<div class="t" style="left:655.45px;top:374.70px;height:44px;line-height:44px;font-family:'Liberation Sans',sans-serif;font-size:22px;font-weight:400;color:#000;transform:scaleX(1.2615);">ま</div>
<div class="t" style="left:683.00px;top:374.70px;height:44px;line-height:44px;font-family:'Liberation Sans',sans-serif;font-size:22px;font-weight:400;color:#000;transform:scaleX(0.9000);">た</div>
<div class="t" style="left:707.95px;top:374.20px;height:44px;line-height:44px;font-family:'Liberation Sans',sans-serif;font-size:22px;font-weight:400;color:#000;transform:scaleX(0.9474);">は</div>
<div class="t" style="left:734.70px;top:378.30px;height:44px;line-height:44px;font-family:'Liberation Sans',sans-serif;font-size:22px;font-weight:400;color:#000;transform:scaleX(0.9000);">「</div>
<div class="t" style="left:757.30px;top:375.65px;height:44px;line-height:44px;font-family:'Liberation Sans',sans-serif;font-size:22px;font-weight:400;color:#000;transform:scaleX(0.8190);">得</div>
<div class="t" style="left:781.60px;top:376.15px;height:44px;line-height:44px;font-family:'Liberation Sans',sans-serif;font-size:22px;font-weight:400;color:#000;transform:scaleX(1.0381);">意</div>
<div class="t" style="left:807.10px;top:375.95px;height:44px;line-height:44px;font-family:'Liberation Sans',sans-serif;font-size:22px;font-weight:400;color:#000;transform:scaleX(0.9000);">」</div>
<div class="t" style="left:648.53px;top:414.05px;height:44px;line-height:44px;font-family:'Liberation Sans',sans-serif;font-size:22px;font-weight:400;color:#000;transform:scaleX(1.1684);">好き</div>
<div class="t" style="left:762.50px;top:415.05px;height:44px;line-height:44px;font-family:'Liberation Sans',sans-serif;font-size:22px;font-weight:400;color:#000;transform:scaleX(1.0721);">得意</div>
<div class="t" style="left:712.75px;top:459.45px;height:46px;line-height:46px;font-family:'Liberation Sans',sans-serif;font-size:23px;font-weight:400;color:#000;transform:scaleX(0.7545);">8</div>
<div class="t" style="left:825.75px;top:459.45px;height:46px;line-height:46px;font-family:'Liberation Sans',sans-serif;font-size:23px;font-weight:400;color:#000;transform:scaleX(0.7545);">8</div>
<div class="t" style="left:712.96px;top:497.00px;height:46px;line-height:46px;font-family:'Liberation Sans',sans-serif;font-size:23px;font-weight:400;color:#000;transform:scaleX(0.7364);">6</div>
<div class="t" style="left:826.07px;top:497.00px;height:46px;line-height:46px;font-family:'Liberation Sans',sans-serif;font-size:23px;font-weight:400;color:#000;transform:scaleX(0.7273);">7</div>
<div class="t" style="left:712.96px;top:534.60px;height:46px;line-height:46px;font-family:'Liberation Sans',sans-serif;font-size:23px;font-weight:400;color:#000;transform:scaleX(0.7364);">6</div>
<div class="t" style="left:825.97px;top:534.60px;height:46px;line-height:46px;font-family:'Liberation Sans',sans-serif;font-size:23px;font-weight:400;color:#000;transform:scaleX(0.7273);">3</div>
<div class="t" style="left:713.08px;top:572.15px;height:46px;line-height:46px;font-family:'Liberation Sans',sans-serif;font-size:23px;font-weight:400;color:#000;transform:scaleX(0.7182);">5</div>
<svg style="left:825.40px;top:585.05px" width="12" height="19.2"><path d="M5.60 18.20 V1.6 M6.00 1.3 L2.90 4.6" stroke="#000" stroke-width="2" fill="none"/></svg>
<div class="t" style="left:712.97px;top:609.55px;height:46px;line-height:46px;font-family:'Liberation Sans',sans-serif;font-size:23px;font-weight:400;color:#000;transform:scaleX(0.7273);">3</div>
<div class="t" style="left:825.97px;top:609.55px;height:46px;line-height:46px;font-family:'Liberation Sans',sans-serif;font-size:23px;font-weight:400;color:#000;transform:scaleX(0.7273);">3</div>
<svg style="left:712.40px;top:659.85px" width="12" height="19.2"><path d="M5.60 18.20 V1.6 M6.00 1.3 L2.90 4.6" stroke="#000" stroke-width="2" fill="none"/></svg>
<svg style="left:825.40px;top:659.85px" width="12" height="19.2"><path d="M5.60 18.20 V1.6 M6.00 1.3 L2.90 4.6" stroke="#000" stroke-width="2" fill="none"/></svg>
<div class="t" style="left:713.30px;top:684.50px;height:46px;line-height:46px;font-family:'Liberation Sans',sans-serif;font-size:23px;font-weight:400;color:#000;transform:scaleX(0.7250);">4</div>
<div class="t" style="left:826.08px;top:684.50px;height:46px;line-height:46px;font-family:'Liberation Sans',sans-serif;font-size:23px;font-weight:400;color:#000;transform:scaleX(0.7182);">5</div>
<div class="t" style="left:712.96px;top:722.05px;height:46px;line-height:46px;font-family:'Liberation Sans',sans-serif;font-size:23px;font-weight:400;color:#000;transform:scaleX(0.7364);">2</div>
<div class="t" style="left:826.30px;top:722.05px;height:46px;line-height:46px;font-family:'Liberation Sans',sans-serif;font-size:23px;font-weight:400;color:#000;transform:scaleX(0.7250);">4</div>
<div class="t" style="left:713.17px;top:759.60px;height:46px;line-height:46px;font-family:'Liberation Sans',sans-serif;font-size:23px;font-weight:400;color:#000;transform:scaleX(0.7273);">0</div>
<svg style="left:699.90px;top:772.50px" width="12" height="19.2"><path d="M5.60 18.20 V1.6 M6.00 1.3 L2.90 4.6" stroke="#000" stroke-width="2" fill="none"/></svg>
<div class="t" style="left:825.96px;top:759.60px;height:46px;line-height:46px;font-family:'Liberation Sans',sans-serif;font-size:23px;font-weight:400;color:#000;transform:scaleX(0.7364);">6</div>
<div class="t" style="left:713.08px;top:797.15px;height:46px;line-height:46px;font-family:'Liberation Sans',sans-serif;font-size:23px;font-weight:400;color:#000;transform:scaleX(0.7182);">5</div>
<div class="t" style="left:826.08px;top:797.15px;height:46px;line-height:46px;font-family:'Liberation Sans',sans-serif;font-size:23px;font-weight:400;color:#000;transform:scaleX(0.7182);">5</div>
<div class="t" style="left:712.96px;top:834.65px;height:46px;line-height:46px;font-family:'Liberation Sans',sans-serif;font-size:23px;font-weight:400;color:#000;transform:scaleX(0.7364);">2</div>
<div class="t" style="left:825.96px;top:834.65px;height:46px;line-height:46px;font-family:'Liberation Sans',sans-serif;font-size:23px;font-weight:400;color:#000;transform:scaleX(0.7364);">2</div>
<div class="t" style="left:712.96px;top:872.15px;height:46px;line-height:46px;font-family:'Liberation Sans',sans-serif;font-size:23px;font-weight:400;color:#000;transform:scaleX(0.7364);">6</div>
<div class="t" style="left:825.86px;top:872.15px;height:46px;line-height:46px;font-family:'Liberation Sans',sans-serif;font-size:23px;font-weight:400;color:#000;transform:scaleX(0.7364);">9</div>
<div class="t" style="left:162.50px;top:611.90px;height:42px;line-height:42px;font-family:'Liberation Sans',sans-serif;font-size:21px;font-weight:400;color:#000;transform:scaleX(0.9889);letter-spacing:3.5px">経験</div>
<div class="t" style="left:162.50px;top:648.80px;height:42px;line-height:42px;font-family:'Liberation Sans',sans-serif;font-size:21px;font-weight:400;color:#000;transform:scaleX(0.9940);letter-spacing:3.5px">正しく話すこと</div>
<div class="t" style="left:161.49px;top:686.85px;height:42px;line-height:42px;font-family:'Liberation Sans',sans-serif;font-size:21px;font-weight:400;color:#000;transform:scaleX(1.0054);letter-spacing:3.5px">整理整頓</div>
<div class="t" style="left:162.50px;top:724.40px;height:42px;line-height:42px;font-family:'Liberation Sans',sans-serif;font-size:21px;font-weight:400;color:#000;transform:scaleX(0.9889);letter-spacing:3.5px">掃除</div>
<div class="t" style="left:162.50px;top:761.95px;height:42px;line-height:42px;font-family:'Liberation Sans',sans-serif;font-size:21px;font-weight:400;color:#000;transform:scaleX(0.9889);letter-spacing:3.5px">料理</div>
<div class="t" style="left:161.49px;top:799.50px;height:42px;line-height:42px;font-family:'Liberation Sans',sans-serif;font-size:21px;font-weight:400;color:#000;transform:scaleX(1.0114);letter-spacing:3.5px">洗濯</div>
<div class="t" style="left:160.49px;top:836.50px;height:42px;line-height:42px;font-family:'Liberation Sans',sans-serif;font-size:21px;font-weight:400;color:#000;transform:scaleX(1.0047);letter-spacing:3.5px">台本無しで話すこと</div>
<div class="t" style="left:160.50px;top:874.00px;height:42px;line-height:42px;font-family:'Liberation Sans',sans-serif;font-size:21px;font-weight:400;color:#000;transform:scaleX(1.0000);letter-spacing:3.5px">台本を準備して話すこと</div>
<svg style="left:900px;top:380px" width="508" height="523">
<g transform="translate(-900,-380)">
<line x1="955" y1="410" x2="1408" y2="410" stroke="#7f7f7f" stroke-width="1.6"/>
<line x1="954.5" y1="410" x2="954.5" y2="903" stroke="#000" stroke-width="3"/>
<line x1="1009" y1="458.5" x2="1408" y2="458.5" stroke="#8a8a8a" stroke-width="1.6"/>
<line x1="1010" y1="458.5" x2="1010" y2="903" stroke="#9a9a9a" stroke-width="2"/>
<line x1="1020" y1="855.2" x2="1382" y2="855.2" stroke="#1a1a1a" stroke-width="2"/>
<path d="M1016.7 855.2 L1030.7 845.2 L1024.5 855.2 L1030.7 865.3 Z" fill="#000"/>
<ellipse cx="1428" cy="854.3" rx="46.5" ry="18" fill="#fff" stroke="#c4c4c4" stroke-width="1.6"/>
<ellipse cx="1270" cy="918" rx="48" ry="20" fill="#fff" stroke="#c4c4c4" stroke-width="1.6"/>
<g fill="#fff" stroke="#595959" stroke-width="2.2">
<circle cx="955.4" cy="409.9" r="7.2"/>
<circle cx="955.1" cy="855.3" r="7.2"/>
<circle cx="1008.8" cy="458.5" r="7.2"/>
<circle cx="1008.6" cy="855.3" r="7.2"/>
</g>
</g></svg>
<div class="t" style="left:971.80px;top:817.00px;height:50px;line-height:50px;font-family:'Liberation Sans',sans-serif;font-size:25px;font-weight:700;color:#000;transform:scaleX(1.0080);">嫌</div>
<div class="t" style="left:971.69px;top:841.45px;height:50px;line-height:50px;font-family:'Liberation Sans',sans-serif;font-size:25px;font-weight:700;color:#000;transform:scaleX(1.0045);">い</div>
<svg style="left:1400px;top:840px" width="8" height="30"><rect x="6" y="6.2" width="2" height="3.7" fill="#000"/><rect x="6" y="11.3" width="2" height="1.6" fill="#000"/><rect x="6.3" y="14.2" width="1.7" height="2.6" fill="#000"/><rect x="6.3" y="19.5" width="1.7" height="3.3" fill="#000"/></svg>
<div style="left:13.7px;top:628px;width:227.3px;height:4px;background:#f4f4f4;"></div>
<div style="left:13.7px;top:632px;width:227.3px;height:30px;background:linear-gradient(rgba(0,0,0,0.11),rgba(0,0,0,0));"></div>
<div style="left:241px;top:220px;width:5px;height:420px;background:linear-gradient(90deg,rgba(0,0,0,0.05),rgba(0,0,0,0));"></div>
<div style="left:13.7px;top:213.4px;width:227.3px;height:415.4px;background:#fff;box-sizing:border-box;border:1.3px solid #c4c4c4;border-radius:5px"></div>
<div style="left:16px;top:328.4px;width:223.2px;height:36.60000000000002px;background:#c6c6c6;"></div>
<div class="t" style="left:64.39px;top:216.20px;height:38px;line-height:38px;font-family:'Liberation Sans',sans-serif;font-size:19px;font-weight:400;color:#444;transform:scaleX(1.1143);">軸(<u>X</u>)</div>
<div class="t" style="left:64.59px;top:253.66px;height:38px;line-height:38px;font-family:'Liberation Sans',sans-serif;font-size:19px;font-weight:400;color:#444;transform:scaleX(0.9111);">軸ラベル(<u>A</u>)</div>
<div class="t" style="left:63.92px;top:290.62px;height:38px;line-height:38px;font-family:'Liberation Sans',sans-serif;font-size:19px;font-weight:400;color:#444;transform:scaleX(0.7883);">グラフ タイトル(<u>C</u>)</div>
<div class="t" style="left:64.65px;top:327.58px;height:38px;line-height:38px;font-family:'Liberation Sans',sans-serif;font-size:19px;font-weight:400;color:#1f1f1f;transform:scaleX(0.8507);">データ ラベル(<u>D</u>)</div>
<div class="t" style="left:64.66px;top:366.04px;height:38px;line-height:38px;font-family:'Liberation Sans',sans-serif;font-size:19px;font-weight:400;color:#b4b4b4;transform:scaleX(0.8407);">データ テーブル(<u>B</u>)</div>
<div class="t" style="left:65.50px;top:403.50px;height:38px;line-height:38px;font-family:'Liberation Sans',sans-serif;font-size:19px;font-weight:400;color:#444;transform:scaleX(1.0050);">誤差範囲(<u>E</u>)</div>
<div class="t" style="left:62.31px;top:440.96px;height:38px;line-height:38px;font-family:'Liberation Sans',sans-serif;font-size:19px;font-weight:400;color:#444;transform:scaleX(1.0637);">目盛線(<u>G</u>)</div>
<div class="t" style="left:64.43px;top:477.92px;height:38px;line-height:38px;font-family:'Liberation Sans',sans-serif;font-size:19px;font-weight:400;color:#444;transform:scaleX(1.0729);">凡例(<u>L</u>)</div>
<div class="t" style="left:65.50px;top:515.38px;height:38px;line-height:38px;font-family:'Liberation Sans',sans-serif;font-size:19px;font-weight:400;color:#b4b4b4;transform:scaleX(1.1500);">線(<u>I</u>)</div>
<div class="t" style="left:64.46px;top:553.34px;height:38px;line-height:38px;font-family:'Liberation Sans',sans-serif;font-size:19px;font-weight:400;color:#444;transform:scaleX(1.0418);">近似曲線(<u>T</u>)</div>
<div class="t" style="left:61.99px;top:589.80px;height:38px;line-height:38px;font-family:'Liberation Sans',sans-serif;font-size:19px;font-weight:400;color:#b4b4b4;transform:scaleX(0.8784);">ローソク(<u>U</u>)</div>
<svg style="left:0;top:0" width="250" height="640"><path d="M218.3 230.0 L225.6 235.2 L218.3 240.4 Z" fill="#444"/><path d="M218.3 267.5 L225.6 272.7 L218.3 277.9 Z" fill="#444"/><path d="M218.3 304.9 L225.6 310.1 L218.3 315.3 Z" fill="#444"/><path d="M218.3 342.4 L225.6 347.6 L218.3 352.8 Z" fill="#444"/><path d="M218.3 379.8 L225.6 385.0 L218.3 390.2 Z" fill="#c8c8c8"/><path d="M218.3 417.3 L225.6 422.5 L218.3 427.7 Z" fill="#444"/><path d="M218.3 454.8 L225.6 460.0 L218.3 465.2 Z" fill="#444"/><path d="M218.3 492.2 L225.6 497.4 L218.3 502.6 Z" fill="#444"/><path d="M218.3 529.7 L225.6 534.9 L218.3 540.1 Z" fill="#c8c8c8"/><path d="M218.3 567.1 L225.6 572.3 L218.3 577.5 Z" fill="#444"/><path d="M218.3 604.6 L225.6 609.8 L218.3 615.0 Z" fill="#c8c8c8"/></svg>
<svg style="left:0;top:0" width="60" height="640"><g fill="none" stroke="#6b6b6b" stroke-width="1.3"><rect x="29.1" y="230.9" width="4.8" height="9.3"/><rect x="33.9" y="226.8" width="4.3" height="13.5" fill="#a9a9a9"/><rect x="38.3" y="230.9" width="4.5" height="9.3"/></g><path d="M23.8 223.5 V243.2 H46.7" fill="none" stroke="#e46c0a" stroke-width="1.6"/><rect x="22.2" y="226.0" width="1.6" height="1.2" fill="#e46c0a"/><rect x="22.2" y="229.4" width="1.6" height="1.2" fill="#e46c0a"/><rect x="22.2" y="232.8" width="1.6" height="1.2" fill="#e46c0a"/><rect x="22.2" y="236.2" width="1.6" height="1.2" fill="#e46c0a"/><rect x="22.2" y="239.6" width="1.6" height="1.2" fill="#e46c0a"/><rect x="26.0" y="243.5" width="1.2" height="1.8" fill="#e46c0a"/><rect x="29.4" y="243.5" width="1.2" height="1.8" fill="#e46c0a"/><rect x="32.8" y="243.5" width="1.2" height="1.8" fill="#e46c0a"/><rect x="36.2" y="243.5" width="1.2" height="1.8" fill="#e46c0a"/><rect x="39.6" y="243.5" width="1.2" height="1.8" fill="#e46c0a"/><rect x="43.0" y="243.5" width="1.2" height="1.8" fill="#e46c0a"/><g fill="none" stroke="#6b6b6b" stroke-width="1.3"><rect x="29.1" y="267.9" width="4.8" height="9.3"/><rect x="33.9" y="263.8" width="4.3" height="13.5" fill="#a9a9a9"/><rect x="38.3" y="267.9" width="4.5" height="9.3"/></g><rect x="23.3" y="262.5" width="3" height="15.3" fill="#e46c0a"/><rect x="28.4" y="280.2" width="15.2" height="2.5" fill="#e46c0a"/><g fill="none" stroke="#6b6b6b" stroke-width="1.3"><rect x="27.2" y="308.4" width="4.8" height="9.4"/><rect x="32.0" y="304.1" width="4.3" height="13.7" fill="#a9a9a9"/><rect x="36.5" y="308.4" width="4.5" height="9.4"/></g><rect x="26.5" y="298.5" width="15.3" height="3" fill="#e46c0a"/><g fill="none" stroke="#5a5a5a" stroke-width="1.3"><rect x="27.1" y="345.4" width="5.2" height="9.5"/><rect x="32.3" y="341.1" width="4.7" height="13.8" fill="#a9a9a9"/><rect x="37.2" y="345.4" width="4.9" height="9.5"/></g><circle cx="34.6" cy="337.3" r="1.5" fill="#e46c0a"/><circle cx="28.5" cy="342" r="1.5" fill="#e46c0a"/><circle cx="40.8" cy="342" r="1.5" fill="#e46c0a"/><g fill="none" stroke="#c4c4c4" stroke-width="1.3"><rect x="27.8" y="379.8" width="5.0" height="7.3"/><rect x="32.7" y="376.6" width="4.5" height="10.5" fill="#e0e0e0"/><rect x="37.5" y="379.8" width="4.7" height="7.3"/></g><g fill="none" stroke="#c4c4c4" stroke-width="1.3"><path d="M25.6 374 V394"/><rect x="27" y="388" width="18" height="6"/><path d="M27 391 H45 M35 388 V394"/></g><g fill="none" stroke="#6b6b6b" stroke-width="1.3"><rect x="27.1" y="420.2" width="5.2" height="7.8"/><rect x="32.3" y="416.8" width="4.7" height="11.3" fill="#a9a9a9"/><rect x="37.2" y="420.2" width="4.9" height="7.8"/></g><g stroke="#e46c0a" stroke-width="1.4"><path d="M29.1 416.5 V421 M34.6 412 V417 M40.1 416.5 V421"/></g><g stroke="#e46c0a" stroke-width="1.1" opacity="0.85"><path d="M25.2 451 H43.7 M25.2 456.5 H43.7 M25.2 462 H43.7 M25.2 467 H43.7 M27 449.7 V467.3 M32 449.7 V467.3 M37 449.7 V467.3 M42 449.7 V467.3"/></g><g fill="none" stroke="#5a5a5a" stroke-width="1.3"><rect x="28.2" y="459.1" width="4.5" height="7.5"/><rect x="32.7" y="455.8" width="4.0" height="10.8" fill="#a9a9a9"/><rect x="37.0" y="459.1" width="4.2" height="7.5"/></g><g fill="none" stroke="#6b6b6b" stroke-width="1.3"><rect x="23.9" y="495.8" width="4.5" height="9.0"/><rect x="28.4" y="491.8" width="4.0" height="13.0" fill="#a9a9a9"/><rect x="32.7" y="495.8" width="4.2" height="9.0"/></g><rect x="37.5" y="484.2" width="9" height="12.5" fill="#fff" stroke="#e46c0a" stroke-width="1.5"/><g fill="#4a90c0"><rect x="39.8" y="486.8" width="1.4" height="1.4"/><rect x="39.8" y="489.7" width="1.4" height="1.4"/><rect x="39.8" y="492.6" width="1.4" height="1.4"/></g><g fill="#e46c0a"><rect x="42.6" y="486.8" width="1.8" height="1.4"/><rect x="42.6" y="489.7" width="1.8" height="1.4"/><rect x="42.6" y="492.6" width="1.8" height="1.4"/></g><g fill="none" stroke="#c4c4c4" stroke-width="1.3"><path d="M22.5 523.5 V544.5 H45"/><path d="M25 540 L25 530 L31 527 L37 531 L43 526.5 V540 L37 543 L31 539 Z M31 527 V539 M37 531 V543"/></g><g fill="none" stroke="#6b6b6b" stroke-width="1.5"><path d="M22.4 561.5 V582.5 H45"/></g><path d="M24.5 580 Q37 578 44 562" fill="none" stroke="#e46c0a" stroke-width="1.6"/><circle cx="27" cy="570" r="0.9" fill="#6b6b6b"/><circle cx="30" cy="577" r="0.9" fill="#6b6b6b"/><circle cx="33" cy="574" r="0.9" fill="#6b6b6b"/><circle cx="38" cy="573" r="0.9" fill="#6b6b6b"/><circle cx="41" cy="578" r="0.9" fill="#6b6b6b"/><circle cx="45" cy="565" r="0.9" fill="#6b6b6b"/><circle cx="35" cy="567" r="0.9" fill="#6b6b6b"/><g fill="none" stroke="#c4c4c4" stroke-width="1.3"><path d="M22.5 599 V620 H45"/><path d="M28 604 V614 M28 609 H26 M28 605 L43 613 V604 L28 613"/><circle cx="29.5" cy="609" r="3"/></g></svg>
<div style="left:241px;top:851px;width:371px;height:7.7999999999999545px;background:#f6f6f6;"></div>
<div style="left:241px;top:858.8px;width:371px;height:19.200000000000045px;background:linear-gradient(rgba(0,0,0,0.09),rgba(0,0,0,0));"></div>
<div style="left:612px;top:336px;width:5px;height:524px;background:linear-gradient(90deg,rgba(0,0,0,0.07),rgba(0,0,0,0));"></div>
<div style="left:241px;top:329.3px;width:371px;height:524.7px;background:#fff;box-sizing:border-box;border:1.3px solid #c8c8c8;border-radius:4px"></div>
<div style="left:245.9px;top:403.5px;width:61.29999999999998px;height:61.30000000000001px;background:#c6c6c6;box-sizing:border-box;border:1.5px solid #909090"></div>
<div style="left:243.5px;top:813px;width:365.5px;height:37.39999999999998px;background:#c8c8c8;"></div>
<div class="t" style="left:322.55px;top:346.00px;height:38px;line-height:38px;font-family:'Liberation Sans',sans-serif;font-size:19px;font-weight:400;color:#444;transform:scaleX(0.9500);">なし(<u>N</u>)</div>
<div class="t" style="left:322.46px;top:415.60px;height:38px;line-height:38px;font-family:'Liberation Sans',sans-serif;font-size:19px;font-weight:400;color:#444;transform:scaleX(1.0435);">中央(<u>C</u>)</div>
<div class="t" style="left:323.50px;top:483.70px;height:38px;line-height:38px;font-family:'Liberation Sans',sans-serif;font-size:19px;font-weight:400;color:#444;transform:scaleX(1.0854);">左(<u>L</u>)</div>
<div class="t" style="left:322.43px;top:552.30px;height:38px;line-height:38px;font-family:'Liberation Sans',sans-serif;font-size:19px;font-weight:400;color:#444;transform:scaleX(1.0698);">右(<u>R</u>)</div>
<div class="t" style="left:323.50px;top:621.40px;height:38px;line-height:38px;font-family:'Liberation Sans',sans-serif;font-size:19px;font-weight:400;color:#444;transform:scaleX(1.0698);">上(<u>A</u>)</div>
<div class="t" style="left:323.50px;top:689.00px;height:38px;line-height:38px;font-family:'Liberation Sans',sans-serif;font-size:19px;font-weight:400;color:#444;transform:scaleX(1.0694);">下(<u>W</u>)</div>
<div class="t" style="left:322.62px;top:758.60px;height:38px;line-height:38px;font-family:'Liberation Sans',sans-serif;font-size:19px;font-weight:400;color:#444;transform:scaleX(0.8834);">データ吹き出し(<u>U</u>)</div>
<div class="t" style="left:290.13px;top:814.15px;height:38px;line-height:38px;font-family:'Liberation Sans',sans-serif;font-size:19px;font-weight:400;color:#333;transform:scaleX(0.8354);">その他のデータ ラベル オプション(<u>M</u>)...</div>
<svg style="left:0;top:0" width="620" height="860"><polyline points="261.6,372.2 271.2,361.3 280.6,367.6 291.6,356.4" fill="none" stroke="#6f6f6f" stroke-width="1.9"/><circle cx="261.6" cy="372.2" r="2.1" fill="#6f6f6f"/><circle cx="271.2" cy="361.3" r="2.1" fill="#6f6f6f"/><circle cx="280.6" cy="367.6" r="2.1" fill="#6f6f6f"/><circle cx="291.6" cy="356.4" r="2.1" fill="#6f6f6f"/><rect x="256.6" y="365.4" width="7.6" height="3.2" fill="#e8731d"/><rect x="266.2" y="354.5" width="7.6" height="3.2" fill="#e8731d"/><rect x="275.6" y="360.8" width="7.6" height="3.2" fill="#e8731d"/><rect x="286.6" y="349.6" width="7.6" height="3.2" fill="#e8731d"/><path d="M286.5 377.5 L300.5 389.5 M300.5 377.5 L286.5 389.5" stroke="#d9552e" stroke-width="2.6" stroke-linecap="round"/><polyline points="260.3,442.3 269.9,431.4 279.3,437.7 290.3,426.5" fill="none" stroke="#6f6f6f" stroke-width="1.9"/><rect x="256.5" y="440.7" width="7.6" height="3.2" fill="#e8731d"/><rect x="266.1" y="429.8" width="7.6" height="3.2" fill="#e8731d"/><rect x="275.5" y="436.1" width="7.6" height="3.2" fill="#e8731d"/><rect x="286.5" y="424.9" width="7.6" height="3.2" fill="#e8731d"/><polyline points="264.6,509.9 274.2,499.0 283.6,505.3 294.6,494.1" fill="none" stroke="#6f6f6f" stroke-width="1.9"/><circle cx="264.6" cy="509.9" r="2.1" fill="#6f6f6f"/><circle cx="274.2" cy="499.0" r="2.1" fill="#6f6f6f"/><circle cx="283.6" cy="505.3" r="2.1" fill="#6f6f6f"/><circle cx="294.6" cy="494.1" r="2.1" fill="#6f6f6f"/><rect x="253.8" y="507.3" width="7.6" height="3.2" fill="#e8731d"/><rect x="263.4" y="496.4" width="7.6" height="3.2" fill="#e8731d"/><rect x="272.8" y="502.7" width="7.6" height="3.2" fill="#e8731d"/><rect x="283.8" y="491.5" width="7.6" height="3.2" fill="#e8731d"/><polyline points="258.4,578.5 268.0,567.6 277.4,573.9 288.4,562.7" fill="none" stroke="#6f6f6f" stroke-width="1.9"/><circle cx="258.4" cy="578.5" r="2.1" fill="#6f6f6f"/><circle cx="268.0" cy="567.6" r="2.1" fill="#6f6f6f"/><circle cx="277.4" cy="573.9" r="2.1" fill="#6f6f6f"/><circle cx="288.4" cy="562.7" r="2.1" fill="#6f6f6f"/><rect x="261.6" y="576.9" width="7.6" height="3.2" fill="#e8731d"/><rect x="271.2" y="566.0" width="7.6" height="3.2" fill="#e8731d"/><rect x="280.6" y="572.3" width="7.6" height="3.2" fill="#e8731d"/><rect x="291.6" y="561.1" width="7.6" height="3.2" fill="#e8731d"/><polyline points="261.6,647.3 271.2,636.4 280.6,642.7 291.6,631.5" fill="none" stroke="#6f6f6f" stroke-width="1.9"/><circle cx="261.6" cy="647.3" r="2.1" fill="#6f6f6f"/><circle cx="271.2" cy="636.4" r="2.1" fill="#6f6f6f"/><circle cx="280.6" cy="642.7" r="2.1" fill="#6f6f6f"/><circle cx="291.6" cy="631.5" r="2.1" fill="#6f6f6f"/><rect x="257.8" y="640.2" width="7.6" height="3.2" fill="#e8731d"/><rect x="267.4" y="629.3" width="7.6" height="3.2" fill="#e8731d"/><rect x="276.8" y="635.6" width="7.6" height="3.2" fill="#e8731d"/><rect x="287.8" y="624.4" width="7.6" height="3.2" fill="#e8731d"/><polyline points="261.6,716.3 271.2,705.4 280.6,711.7 291.6,700.5" fill="none" stroke="#6f6f6f" stroke-width="1.9"/><circle cx="261.6" cy="716.3" r="2.1" fill="#6f6f6f"/><circle cx="271.2" cy="705.4" r="2.1" fill="#6f6f6f"/><circle cx="280.6" cy="711.7" r="2.1" fill="#6f6f6f"/><circle cx="291.6" cy="700.5" r="2.1" fill="#6f6f6f"/><rect x="257.8" y="720.2" width="7.6" height="3.2" fill="#e8731d"/><rect x="267.4" y="709.3" width="7.6" height="3.2" fill="#e8731d"/><rect x="276.8" y="715.6" width="7.6" height="3.2" fill="#e8731d"/><rect x="287.8" y="704.4" width="7.6" height="3.2" fill="#e8731d"/><polyline points="261.6,784.8 271.2,773.9 280.6,780.2 291.6,769.0" fill="none" stroke="#6f6f6f" stroke-width="1.9"/><circle cx="261.6" cy="784.8" r="2.1" fill="#6f6f6f"/><circle cx="271.2" cy="773.9" r="2.1" fill="#6f6f6f"/><circle cx="280.6" cy="780.2" r="2.1" fill="#6f6f6f"/><circle cx="291.6" cy="769.0" r="2.1" fill="#6f6f6f"/><rect x="269.6" y="762.3" width="7" height="3.6" fill="#e8731d"/><path d="M271.5 765.9 L273.2 768.5 L274.8 765.9Z" fill="#e8731d"/></svg>
</body></html>
